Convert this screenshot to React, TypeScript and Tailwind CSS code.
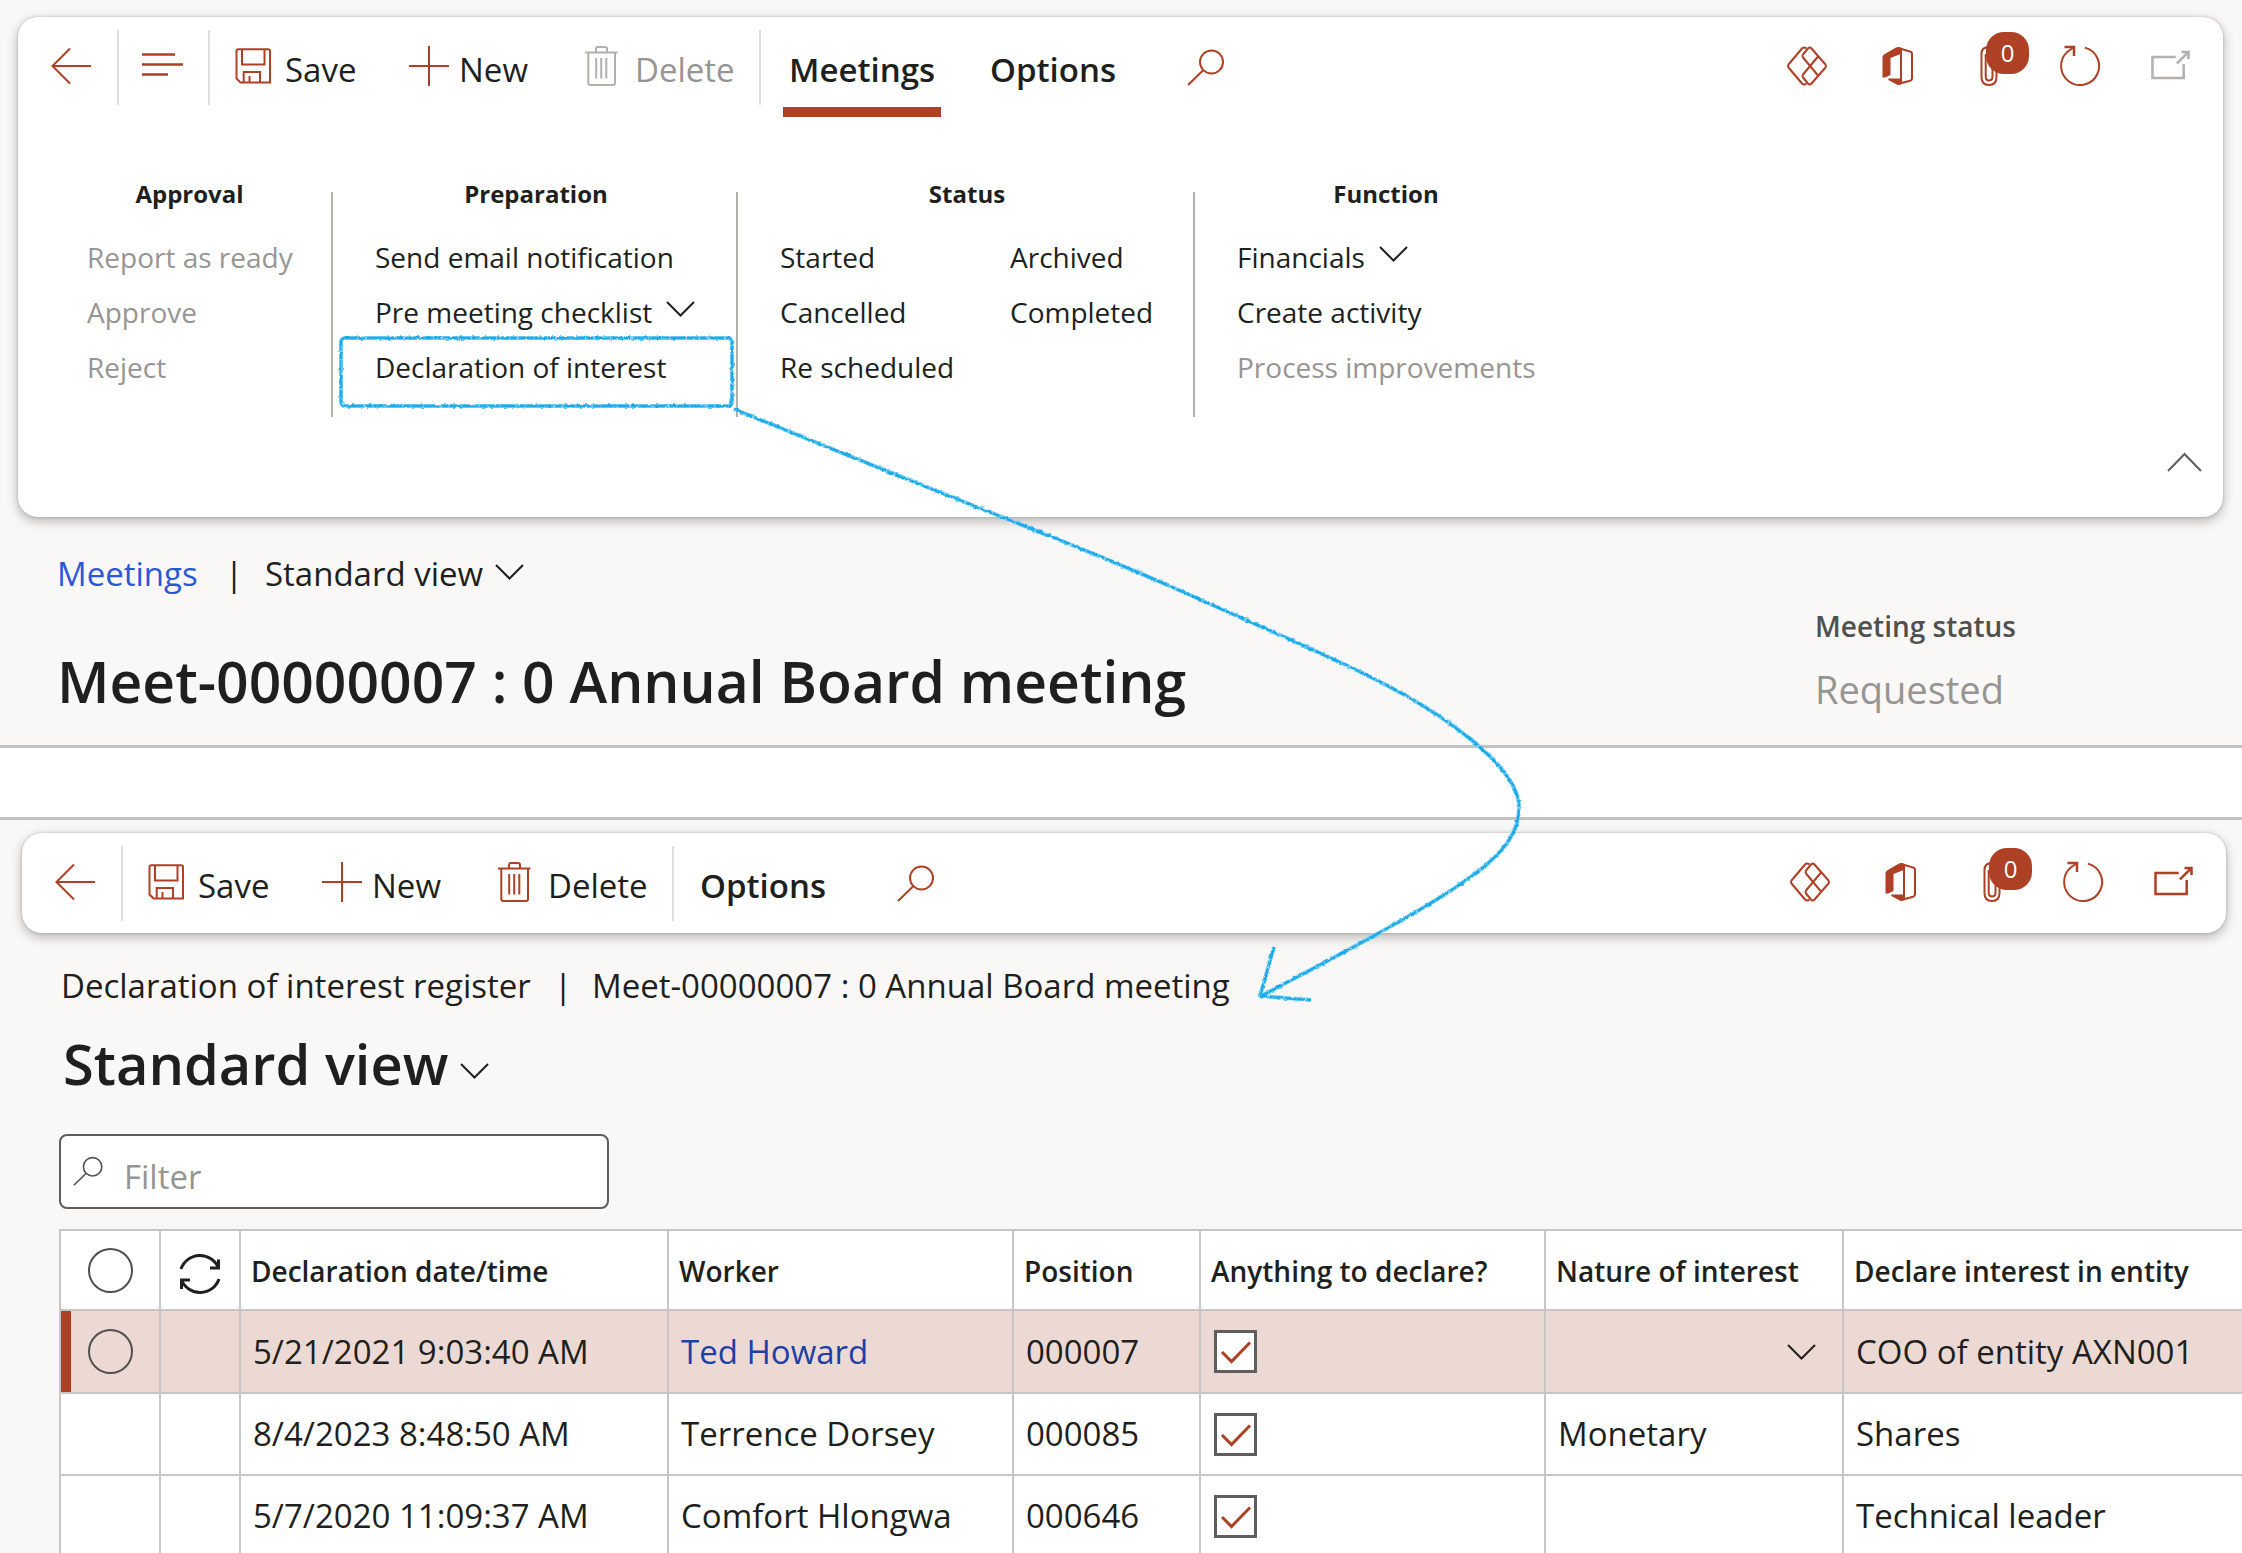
import type { ReactNode } from "react";

const RED = "#ad4025";

/* ---------- icons ---------- */

type IconProps = { children: ReactNode; size?: string; box?: string };

function Icon({ children, size = "size-10", box = "0 0 40 40" }: IconProps) {
  return (
    <svg
      viewBox={box}
      className={`${size} shrink-0 overflow-visible`}
      fill="none"
      stroke="currentColor"
      strokeWidth="2"
      aria-hidden="true"
    >
      {children}
    </svg>
  );
}

const BackIcon = () => (
  <Icon>
    <path d="M1 20H40M19 2.500L1.500 20L19 37.500" />
  </Icon>
);

const LinesIcon = () => (
  <Icon>
    <path d="M0 8.500H33M0 18.500H41M0 28.500H26" strokeWidth="2.500" />
  </Icon>
);

const SaveIcon = () => (
  <Icon>
    <path d="M1.500 5Q1.500 3.300 3.200 3.300H33.200Q35 3.300 35 5V36.500H5.500L1.500 32.500Z" />
    <path d="M7 3.500V18.500H29.500V3.500M8.700 36.500V26H25V36.500M14.500 30V36" />
  </Icon>
);

const PlusIcon = () => (
  <Icon>
    <path d="M0 20H40M20 0V40" />
  </Icon>
);

const TrashIcon = () => (
  <Icon>
    <path d="M0 6.500H32.500M11 6.500V3Q11 1 13 1H20Q22 1 22 3V6.500" />
    <path d="M3.300 6.500V37Q3.300 39 5.300 39H28Q30 39 30 37V6.500M11.200 12V32.500M16.200 12V32.500M21.300 12V32.500" />
  </Icon>
);

const SearchIcon = ({ size }: { size?: string }) => (
  <Icon size={size}>
    <circle cx="24.500" cy="16" r="11.500" />
    <path d="M16.500 24L1 39" />
  </Icon>
);

const PowerAppsIcon = () => (
  <Icon>
    <g strokeLinejoin="round">
      <path d="M19.500 2.500Q17 0.500 15 2.500L1.500 18.500Q0.300 20 1.500 21.500L15 37.500Q17 39.500 19.500 37.500" />
      <path d="M21 2.500Q22.800 0.500 24.500 2.500L38.500 18.500Q39.500 20 38.500 21.500L24.500 37.500Q22.800 39.500 21 37.500L16 31.500Q15 30 16 28.500L31 10.500M21 2.500L16 8.500Q15 10 16 11.500L31 29.500" />
    </g>
  </Icon>
);

const OfficeIcon = () => (
  <Icon>
    <path
      d="M4.500 11Q4.500 9.500 6 8.500L18 1.500Q19.700 0.600 21.500 1.200L24 2V38L19.700 39L10.300 34V32.500H22V8.300L12.500 12V28Q12.500 29 11.500 29.500L7 31.500H4.500Z"
      fill="currentColor"
      stroke="none"
    />
    <path d="M20 2L32 5.500Q34 6 34 8V32.500Q34 34 32 34.800L20 38" />
  </Icon>
);

const ClipIcon = () => (
  <Icon>
    <path d="M12.500 31V8Q12.500 1 20 1Q27.500 1 27.500 8V31Q27.500 39 20 39Q12.500 39 12.500 31Z" />
    <path d="M16.700 8V30.500Q16.700 34.500 20 34.500Q23.500 34.500 23.500 30.500V12" />
  </Icon>
);

const RefreshIcon = () => (
  <Icon>
    <path d="M24.800 1.600A19 19 0 1 1 7.500 5.800L14 1" />
    <path d="M4.500 1H14V10" strokeWidth="2.500" />
  </Icon>
);

const PopOutIcon = () => (
  <Icon>
    <path d="M24.700 11H1.500V32H32.700V18M26 17.300L37.500 5.800M30.500 6H37.500V13" strokeWidth="2.500" />
  </Icon>
);

const SyncIcon = () => (
  <Icon>
    <g strokeWidth="3">
      <path d="M1 15A20 20 0 0 1 38.500 14M38.500 5.500V14H30" />
      <path d="M39 25A20 20 0 0 1 1.500 26M1.500 35V26H10" />
    </g>
  </Icon>
);

const Chevron = () => (
  <Icon size="w-[29px] h-4" box="0 0 29 16">
    <path d="M1 1L14.500 14.500L28 1" />
  </Icon>
);

/* ---------- shared pieces ---------- */

type ToolButtonProps = { icon: ReactNode; label: string; width: string; disabled?: boolean };

function ToolButton({ icon, label, width, disabled = false }: ToolButtonProps) {
  return (
    <button
      type="button"
      disabled={disabled}
      className={`flex shrink-0 items-center gap-2.5 text-left ${width} ${disabled ? "text-[#979593]" : ""}`}
    >
      <span className={`pb-0.5 ${disabled ? "text-[#b3b0ad]" : "text-[#ad4025]"}`}>{icon}</span>
      <span className="pt-1.5">{label}</span>
    </button>
  );
}

const Divider = () => <div className="h-[75px] w-[2px] shrink-0 bg-[#e1dfdd]" />;

function IconButton({ label, children }: { label: string; children: ReactNode }) {
  return (
    <button type="button" aria-label={label} className="relative shrink-0 pb-0.5 text-[#ad4025]">
      {children}
    </button>
  );
}

function SystemIcons({ canPopOut }: { canPopOut: boolean }) {
  return (
    <div className="ml-auto flex items-center gap-[51px] pr-8">
      <IconButton label="Power Apps">
        <PowerAppsIcon />
      </IconButton>
      <IconButton label="Open in Microsoft Office">
        <OfficeIcon />
      </IconButton>
      <IconButton label="Attachments">
        <ClipIcon />
        <span className="absolute -top-3.5 left-[17px] flex h-[42px] w-[43px] items-center justify-center rounded-[18px] bg-[#ad4025] text-2xl text-white">
          0
        </span>
      </IconButton>
      <IconButton label="Refresh">
        <RefreshIcon />
      </IconButton>
      <button
        type="button"
        aria-label="Open in new window"
        disabled={!canPopOut}
        className={`pb-0.5 ${canPopOut ? "text-[#ad4025]" : "text-[#b3b0ad]"}`}
      >
        <PopOutIcon />
      </button>
    </div>
  );
}

/* ---------- action pane menu ---------- */

type Action = { label: string; disabled?: boolean; menu?: boolean };
type Group = { title: string; width: string; columns: Action[][] };

const groups: Group[] = [
  {
    title: "Approval",
    width: "w-[205px]",
    columns: [
      [
        { label: "Report as ready", disabled: true },
        { label: "Approve", disabled: true },
        { label: "Reject", disabled: true },
      ],
    ],
  },
  {
    title: "Preparation",
    width: "w-[322px]",
    columns: [
      [
        { label: "Send email notification" },
        { label: "Pre meeting checklist", menu: true },
        { label: "Declaration of interest" },
      ],
    ],
  },
  {
    title: "Status",
    width: "w-[374px]",
    columns: [
      [{ label: "Started" }, { label: "Cancelled" }, { label: "Re scheduled" }],
      [{ label: "Archived" }, { label: "Completed" }],
    ],
  },
  {
    title: "Function",
    width: "w-[298px]",
    columns: [
      [
        { label: "Financials", menu: true },
        { label: "Create activity" },
        { label: "Process improvements", disabled: true },
      ],
    ],
  },
];

function ActionGroup({ group, last }: { group: Group; last: boolean }) {
  return (
    <>
      <section className={`shrink-0 ${group.width}`}>
        <h2 className="mb-[18px] text-center text-2xl leading-9 font-bold">{group.title}</h2>
        <div className="flex">
          {group.columns.map((column, i) => (
            <ul key={i} className={group.columns.length > 1 && i === 0 ? "w-[230px]" : ""}>
              {column.map((action) => (
                <li key={action.label} className="h-[55px]">
                  <button
                    type="button"
                    disabled={action.disabled}
                    className={`flex items-center gap-3.5 text-[28px] leading-[55px] whitespace-nowrap ${
                      action.disabled ? "text-[#979593]" : ""
                    }`}
                  >
                    {action.label}
                    {action.menu && (
                      <span className="pb-2">
                        <Chevron />
                      </span>
                    )}
                  </button>
                </li>
              ))}
            </ul>
          ))}
        </div>
      </section>
      {!last && <div className="mt-4 mr-[42px] ml-[39px] h-[225px] w-[2px] shrink-0 bg-[#b3b0ad]" />}
    </>
  );
}

/* ---------- grid ---------- */

const columns = [
  "Declaration date/time",
  "Worker",
  "Position",
  "Anything to declare?",
  "Nature of interest",
  "Declare interest in entity",
];

const rows = [
  {
    date: "5/21/2021 9:03:40 AM",
    worker: "Ted Howard",
    position: "000007",
    nature: "",
    entity: "COO of entity AXN001",
    selected: true,
  },
  {
    date: "8/4/2023 8:48:50 AM",
    worker: "Terrence Dorsey",
    position: "000085",
    nature: "Monetary",
    entity: "Shares",
    selected: false,
  },
  {
    date: "5/7/2020 11:09:37 AM",
    worker: "Comfort Hlongwa",
    position: "000646",
    nature: "",
    entity: "Technical leader",
    selected: false,
  },
];

function RoundCheck({ label }: { label: string }) {
  return (
    <input
      type="checkbox"
      aria-label={label}
      className="ml-[27px] block size-[45px] appearance-none rounded-full border-2 border-[#50504e]"
    />
  );
}

function DeclareCheck({ label }: { label: string }) {
  return (
    <label className="relative block h-[43px] w-[43px]">
      <input
        type="checkbox"
        defaultChecked
        aria-label={label}
        className="block size-full appearance-none border-3 border-[#605e5c] bg-white"
      />
      <svg viewBox="0 0 43 43" className="absolute inset-0 size-full" fill="none" stroke={RED} strokeWidth="3" aria-hidden="true">
        <path d="M8 22L17.500 31.500L36 12.500" />
      </svg>
    </label>
  );
}

const cell = "border-r-2 border-b-2 border-[#c8c6c4] p-0 last:border-r-0";

function RegisterGrid() {
  return (
    <table className="w-full table-fixed border-separate border-spacing-0 border-t-2 border-l-2 border-[#c8c6c4] bg-white text-[33px] whitespace-nowrap">
      <colgroup>
        <col className="w-[100px]" />
        <col className="w-[80px]" />
        <col className="w-[428px]" />
        <col className="w-[345px]" />
        <col className="w-[187px]" />
        <col className="w-[345px]" />
        <col className="w-[298px]" />
        <col />
      </colgroup>
      <thead>
        <tr className="h-20">
          <th scope="col" className={cell}>
            <RoundCheck label="Select all rows" />
          </th>
          <th scope="col" className={cell}>
            <button type="button" aria-label="Refresh rows" className="mt-2 flex w-full justify-center">
              <SyncIcon />
            </button>
          </th>
          {columns.map((name) => (
            <th key={name} scope="col" className={`${cell} pt-0.5 pl-2.5 text-left text-[28px] font-semibold`}>
              {name}
            </th>
          ))}
        </tr>
      </thead>
      <tbody>
        {rows.map((row) => (
          <tr key={row.date} className={row.selected ? "h-[83px] bg-[#edd9d3]" : "h-[82px]"}>
            <td className={`${cell} ${row.selected ? "shadow-[inset_10px_0_0_#ad4025]" : ""}`}>
              {row.selected && <RoundCheck label={`Select ${row.worker}`} />}
            </td>
            <td className={cell} />
            <td className={`${cell} pl-3`}>{row.date}</td>
            <td className={`${cell} pl-3`}>
              {row.selected ? (
                <a href="#worker" className="text-[#1c40a8]">
                  {row.worker}
                </a>
              ) : (
                row.worker
              )}
            </td>
            <td className={`${cell} pl-3`}>{row.position}</td>
            <td className={`${cell} pl-[13px]`}>
              <DeclareCheck label={`${row.worker} has something to declare`} />
            </td>
            <td className={`${cell} pl-3`}>
              {row.selected ? (
                <div className="relative flex items-center justify-end pr-[26px]">
                  <select aria-label="Nature of interest" className="absolute inset-0 appearance-none bg-transparent" defaultValue="">
                    <option value="" />
                    <option>Monetary</option>
                  </select>
                  <Chevron />
                </div>
              ) : (
                row.nature
              )}
            </td>
            <td className={`${cell} pl-3`}>{row.entity}</td>
          </tr>
        ))}
      </tbody>
    </table>
  );
}

/* ---------- marker annotation drawn over both panels ---------- */

function Annotation() {
  const shapes = (
    <>
      <rect x="341" y="338" width="391" height="68" rx="4" />
      <path d="M734 409C822 445 918 484 1002 517C1070 544 1125 566 1190 595C1260 627 1370 672 1425 707C1485 745 1519 780 1519 807C1519 840 1495 862 1444 895C1385 932 1310 970 1261 996" />
      <path d="M1274 947L1260 996L1311 1000" />
    </>
  );
  return (
    <svg
      viewBox="0 0 2242 1553"
      className="pointer-events-none absolute top-0 left-0 h-[1553px] w-[2242px]"
      fill="none"
      strokeLinejoin="round"
      aria-hidden="true"
    >
      <defs>
        <filter id="marker" filterUnits="userSpaceOnUse" x="320" y="320" width="1220" height="700">
          <feTurbulence type="fractalNoise" baseFrequency="0.25" numOctaves="2" seed="4" />
          <feDisplacementMap in="SourceGraphic" scale="3" xChannelSelector="R" yChannelSelector="G" />
        </filter>
      </defs>
      <g filter="url(#marker)">
        <g stroke="#7fd0f4" strokeWidth="4">{shapes}</g>
        <g stroke="#1caaea" strokeWidth="2.500" strokeDasharray="12 1 7 2 15 1">{shapes}</g>
      </g>
    </svg>
  );
}

/* ---------- page ---------- */

export default function App() {
  return (
    <div className="relative h-screen overflow-hidden bg-[#f9f8f7] font-['Open_Sans','Noto_Sans',sans-serif] text-[#201f1e]">
      <main>
        <section className="border-b-3 border-[#c2c2c2] pt-[17px]">
          <div className="mr-[19px] ml-[18px] rounded-[20px] bg-white shadow-[0_4px_12px_rgba(0,0,0,0.28),0_0_3px_rgba(0,0,0,0.2)]">
            <div className="flex h-[100px] items-center pl-[33px] text-[33px]">
              <IconButton label="Back">
                <BackIcon />
              </IconButton>
              <div className="w-[26px] shrink-0" />
              <Divider />
              <div className="w-[23px] shrink-0" />
              <IconButton label="Show list">
                <LinesIcon />
              </IconButton>
              <div className="w-[26px] shrink-0" />
              <Divider />
              <div className="w-[25px] shrink-0" />
              <ToolButton icon={<SaveIcon />} label="Save" width="w-[174px]" />
              <ToolButton icon={<PlusIcon />} label="New" width="w-[176px]" />
              <ToolButton icon={<TrashIcon />} label="Delete" width="w-[174px]" disabled />
              <Divider />
              <div className="w-[22px] shrink-0" />
              <button type="button" className="flex h-full w-[158px] shrink-0 items-center justify-center border-b-10 border-[#ad4025] pt-4 font-semibold">
                Meetings
              </button>
              <button type="button" className="ml-[49px] w-[197px] shrink-0 pt-1.5 text-left font-semibold">
                Options
              </button>
              <IconButton label="Search">
                <SearchIcon />
              </IconButton>
              <SystemIcons canPopOut={false} />
            </div>
            <div className="flex pt-[59px] pl-[69px]">
              {groups.map((group, i) => (
                <ActionGroup key={group.title} group={group} last={i === groups.length - 1} />
              ))}
            </div>
            <div className="flex justify-end pt-[25px] pr-[21px] pb-[35px]">
              <button type="button" aria-label="Collapse action pane" className="flex h-10 items-center text-[#605e5c]">
                <Icon size="w-[35px] h-5" box="0 0 35 20">
                  <path d="M1 19L17.500 2L34 19" />
                </Icon>
              </button>
            </div>
          </div>

          <div className="flex pb-[27px] pl-[57px]">
            <div className="flex-1 pt-[35px]">
              <nav aria-label="Breadcrumb" className="flex items-center text-[33px] leading-[44px]">
                <a href="#meetings" className="w-[168px] text-[#2b57d9]">
                  Meetings
                </a>
                <span className="w-10">|</span>
                <button type="button" className="flex items-center gap-3">
                  Standard view
                  <span className="pb-1">
                    <Chevron />
                  </span>
                </button>
              </nav>
              <h1 className="mt-[49px] text-[57px] leading-[73px] font-semibold">Meet-00000007 : 0 Annual Board meeting</h1>
            </div>
            <dl className="w-[427px] pt-[89px]">
              <dt className="text-[28px] leading-10 font-semibold text-[#50504e]">Meeting status</dt>
              <dd className="mt-[18px] text-[38px] leading-[50px] text-[#979593]">Requested</dd>
            </dl>
          </div>
        </section>

        <div className="h-[69px] bg-white" />

        <section className="border-t-3 border-[#c2c2c2] pt-[13px]">
          <div className="mr-4 ml-[22px] flex h-[100px] items-center rounded-[20px] bg-white pl-[33px] text-[33px] shadow-[0_4px_12px_rgba(0,0,0,0.28),0_0_3px_rgba(0,0,0,0.2)]">
            <IconButton label="Back">
              <BackIcon />
            </IconButton>
            <div className="w-[26px] shrink-0" />
            <Divider />
            <div className="w-[25px] shrink-0" />
            <ToolButton icon={<SaveIcon />} label="Save" width="w-[174px]" />
            <ToolButton icon={<PlusIcon />} label="New" width="w-[176px]" />
            <ToolButton icon={<TrashIcon />} label="Delete" width="w-[174px]" />
            <Divider />
            <button type="button" className="ml-[26px] w-[197px] shrink-0 pt-1.5 text-left font-semibold">
              Options
            </button>
            <IconButton label="Search">
              <SearchIcon />
            </IconButton>
            <SystemIcons canPopOut />
          </div>

          <nav aria-label="Register breadcrumb" className="flex gap-[22px] pt-[31px] pl-[61px] text-[33px] leading-[44px] whitespace-nowrap">
            <span className="w-[471px]">Declaration of interest register</span>
            <span className="w-4">|</span>
            <span>Meet-00000007 : 0 Annual Board meeting</span>
          </nav>
          <h1 className="mt-[19px] pl-[63px] text-[56px] leading-[72px] font-semibold">
            <button type="button" className="flex items-center gap-3">
              Standard view
              <span className="pt-4">
                <Chevron />
              </span>
            </button>
          </h1>
          <div className="pt-[35px] pl-[59px]">
            <div className="flex h-[75px] w-[550px] items-center rounded-lg border-2 border-[#605e5c] bg-white pl-3">
              <span className="pb-1 text-[#50504e]">
                <SearchIcon size="size-8" />
              </span>
              <input
                type="text"
                aria-label="Filter"
                placeholder="Filter"
                className="ml-[19px] min-w-0 flex-1 pt-2.5 text-[33px] outline-none placeholder:text-[#979593]"
              />
            </div>
            <div className="mt-5">
              <RegisterGrid />
            </div>
          </div>
        </section>
      </main>
      <Annotation />
    </div>
  );
}
